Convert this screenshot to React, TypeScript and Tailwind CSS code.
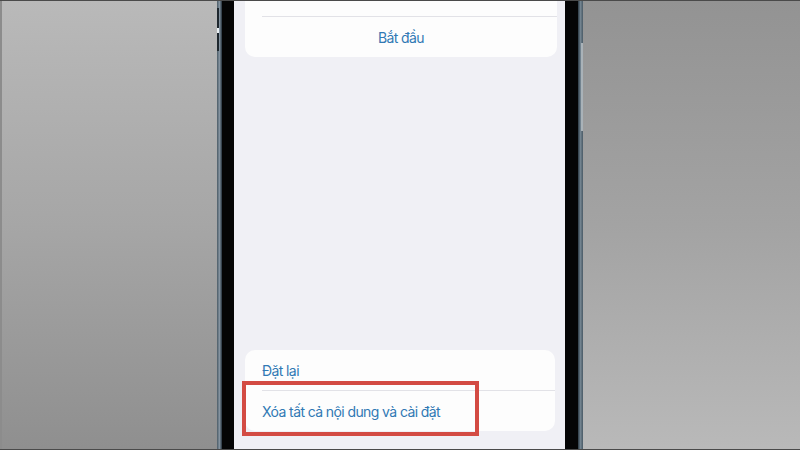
import React from "react";

export default function App() {
  const font = { fontFamily: "Inter, 'Noto Sans', sans-serif" };
  return (
    <div
      className="w-[800px] h-[450px] flex overflow-hidden border-y border-[#4a4a4a] bg-[#a0a0a0]"
      style={font}
    >
      {/* left backdrop */}
      <div className="w-[217px] h-full bg-gradient-to-b from-[#b9b9b9] via-[#a6a6a6] to-[#8f8f8f] border-l-2 border-[#8c8c8c]" />
      {/* left frame */}
      <div className="relative w-[5px] h-full bg-gradient-to-r from-[#4c5c67] via-[#8493a0] to-[#26323c]">
        <div className="absolute left-0 top-[7px] w-[2px] h-[43px] bg-[#1e272e]" />
        <div className="absolute left-0 top-[27px] w-[2px] h-[5px] bg-[#e8eef2]" />
      </div>
      {/* left bezel */}
      <div className="w-[12px] h-full bg-[#050505]" />
      {/* screen */}
      <div className="w-[331px] h-full bg-[#f0f0f5] flex flex-col pl-[11px] pr-[8px]">
        <div className="h-[56px] bg-[#fdfdfd] rounded-b-[10px] flex flex-col justify-end">
          <div className="ml-[17px] h-px bg-[#e2e2e7]" />
          <div className="h-[40px] flex items-center justify-center text-[14px] tracking-[-0.6px] text-[#3179b4]">
            Bắt đầu
          </div>
        </div>
        <div className="flex-1" />
        <div className="relative mb-[18px] mr-[2px] bg-[#fdfdfd] rounded-[10px]">
          <div className="h-[40px] flex items-center pl-[17px] text-[14px] tracking-[-0.6px] text-[#3179b4]">
            Đặt lại
          </div>
          <div className="ml-[17px] h-px bg-[#e2e2e7]" />
          <div className="h-[40px] flex items-center pl-[17px] text-[14px] tracking-[-0.6px] text-[#3179b4]">
            Xóa tất cả nội dung và cài đặt
          </div>
          <div className="absolute left-[-3px] top-[31px] w-[237px] h-[55px] border-[4px] border-[#d34b43]" />
        </div>
      </div>
      {/* right bezel */}
      <div className="w-[13px] h-full bg-[#050505]" />
      {/* right frame */}
      <div className="relative w-[5px] h-full bg-gradient-to-r from-[#2c3a44] via-[#72838f] to-[#4a5a66]">
        <div className="absolute right-0 top-[42px] w-[2px] h-[88px] bg-[#a9b2b8]" />
      </div>
      {/* right backdrop */}
      <div className="flex-1 h-full bg-gradient-to-b from-[#939393] via-[#a3a3a3] to-[#b9b9b9]" />
    </div>
  );
}
